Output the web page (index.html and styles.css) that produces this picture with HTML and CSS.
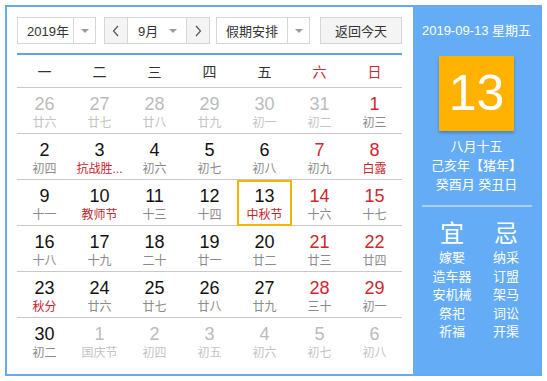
FILE: index.html
```html
<!DOCTYPE html>
<html lang="zh-CN">
<head>
    <meta charset="UTF-8">
    <title>万年历</title>
    <link rel="stylesheet" href="styles.css">
</head>
<body>
<div class="cal">
    <div class="main">
        <!-- 顶部工具条 -->
        <div class="toolbar">
            <div class="select year"><span class="val">2019年</span><span class="drop"><i class="arrow"></i></span></div>
            <div class="month-box">
                <span class="nav"><svg width="8" height="12" viewBox="0 0 8 12"><polyline points="6,1 1.5,6 6,11" fill="none" stroke="#555" stroke-width="1.2"/></svg></span>
                <span class="val month">9月<i class="arrow"></i></span>
                <span class="nav"><svg width="8" height="12" viewBox="0 0 8 12"><polyline points="2,1 6.5,6 2,11" fill="none" stroke="#555" stroke-width="1.2"/></svg></span>
            </div>
            <div class="select holiday"><span class="val">假期安排</span><span class="drop"><i class="arrow"></i></span></div>
            <span class="today">返回今天</span>
        </div>

        <!-- 日历表格 -->
        <div class="grid">
            <div class="wk">一</div><div class="wk">二</div><div class="wk">三</div><div class="wk">四</div><div class="wk">五</div><div class="wk red">六</div><div class="wk red">日</div>

            <div class="day other"><b>26</b><span>廿六</span></div>
            <div class="day other"><b>27</b><span>廿七</span></div>
            <div class="day other"><b>28</b><span>廿八</span></div>
            <div class="day other"><b>29</b><span>廿九</span></div>
            <div class="day other"><b>30</b><span>初一</span></div>
            <div class="day other"><b>31</b><span>初二</span></div>
            <div class="day wkend"><b>1</b><span>初三</span></div>

            <div class="day"><b>2</b><span>初四</span></div>
            <div class="day"><b>3</b><span class="fest">抗战胜...</span></div>
            <div class="day"><b>4</b><span>初六</span></div>
            <div class="day"><b>5</b><span>初七</span></div>
            <div class="day"><b>6</b><span>初八</span></div>
            <div class="day wkend"><b>7</b><span>初九</span></div>
            <div class="day wkend"><b>8</b><span class="fest">白露</span></div>

            <div class="day"><b>9</b><span>十一</span></div>
            <div class="day"><b>10</b><span class="fest">教师节</span></div>
            <div class="day"><b>11</b><span>十三</span></div>
            <div class="day"><b>12</b><span>十四</span></div>
            <div class="day cur"><b>13</b><span class="fest">中秋节</span></div>
            <div class="day wkend"><b>14</b><span>十六</span></div>
            <div class="day wkend"><b>15</b><span>十七</span></div>

            <div class="day"><b>16</b><span>十八</span></div>
            <div class="day"><b>17</b><span>十九</span></div>
            <div class="day"><b>18</b><span>二十</span></div>
            <div class="day"><b>19</b><span>廿一</span></div>
            <div class="day"><b>20</b><span>廿二</span></div>
            <div class="day wkend"><b>21</b><span>廿三</span></div>
            <div class="day wkend"><b>22</b><span>廿四</span></div>

            <div class="day"><b>23</b><span class="fest">秋分</span></div>
            <div class="day"><b>24</b><span>廿六</span></div>
            <div class="day"><b>25</b><span>廿七</span></div>
            <div class="day"><b>26</b><span>廿八</span></div>
            <div class="day"><b>27</b><span>廿九</span></div>
            <div class="day wkend"><b>28</b><span>三十</span></div>
            <div class="day wkend"><b>29</b><span>初一</span></div>

            <div class="day last"><b>30</b><span>初二</span></div>
            <div class="day last other"><b>1</b><span>国庆节</span></div>
            <div class="day last other"><b>2</b><span>初四</span></div>
            <div class="day last other"><b>3</b><span>初五</span></div>
            <div class="day last other"><b>4</b><span>初六</span></div>
            <div class="day last other"><b>5</b><span>初七</span></div>
            <div class="day last other"><b>6</b><span>初八</span></div>
        </div>
    </div>

    <!-- 右侧详情 -->
    <div class="side">
        <div class="date">2019-09-13 星期五</div>
        <div class="big">13</div>
        <div class="lunar">
            <p>八月十五</p>
            <p>己亥年【猪年】</p>
            <p>癸酉月 癸丑日</p>
        </div>
        <div class="line"></div>
        <div class="yiji">
            <div class="col">
                <h3>宜</h3>
                <p>嫁娶</p><p>造车器</p><p>安机械</p><p>祭祀</p><p>祈福</p>
            </div>
            <div class="col">
                <h3>忌</h3>
                <p>纳采</p><p>订盟</p><p>架马</p><p>词讼</p><p>开渠</p>
            </div>
        </div>
    </div>
</div>
</body>
</html>
```

FILE: styles.css
```css
*{
    margin: 0;
    padding: 0;
    box-sizing: border-box;
}
body{
    background: #fff;
    font-family: "Liberation Sans", "Noto Sans CJK SC", sans-serif;
    color: #333;
}
/*整体容器*/
.cal{
    width: 537px;
    height: 371px;
    margin: 5px;
    border: 2px solid #65a9ef;
    display: flex;
}
.main{
    width: 406px;
    padding: 10px 11px 0 10px;
}
/*工具条*/
.toolbar{
    display: flex;
    height: 27px;
    font-size: 13px;
}
.select{
    display: flex;
    border: 1px solid #d6d6d6;
    background: #fff;
}
.select .val{
    display: flex;
    align-items: center;
    padding-left: 9px;
}
.year{
    width: 79px;
}
.year .val{
    width: 55px;
}
.holiday{
    width: 94px;
    margin-left: 6px;
}
.holiday .val{
    width: 70px;
}
.drop{
    flex: 1;
    border-left: 1px solid #d6d6d6;
    display: flex;
    align-items: center;
    justify-content: center;
}
.arrow{
    width: 0;
    height: 0;
    border-left: 4px solid transparent;
    border-right: 4px solid transparent;
    border-top: 4px solid #999;
}
.month-box{
    width: 106px;
    margin-left: 8px;
    display: flex;
    border: 1px solid #d6d6d6;
}
.nav{
    width: 22px;
    background: #f4f4f4;
    display: flex;
    align-items: center;
    justify-content: center;
}
.month-box .month{
    flex: 1;
    display: flex;
    align-items: center;
    justify-content: space-between;
    padding: 0 9px 0 10px;
    border-left: 1px solid #d6d6d6;
    border-right: 1px solid #d6d6d6;
}
.today{
    margin-left: 10px;
    width: 82px;
    border: 1px solid #d6d6d6;
    background: #f4f4f4;
    display: flex;
    align-items: center;
    justify-content: center;
}
/*日历表格*/
.grid{
    margin-top: 9px;
    border-top: 2px solid #5da3ea;
    display: grid;
    grid-template-columns: repeat(7, 55px);
    grid-template-rows: 33px repeat(6, 46px);
}
.wk{
    display: flex;
    align-items: center;
    justify-content: center;
    font-size: 14px;
    border-bottom: 1px solid #c9c9c9;
}
.red{
    color: #d0262e;
}
.day{
    display: flex;
    flex-direction: column;
    align-items: center;
    padding-top: 5px;
    border-bottom: 1px solid #c9c9c9;
}
.day.last{
    border-bottom: none;
}
.day b{
    font-weight: normal;
    font-size: 18px;
    line-height: 22px;
    color: #111;
}
.day span{
    font-size: 12px;
    line-height: 16px;
    color: #8a8a8a;
}
.day .fest{
    color: #c8232c;
}
.wkend b{
    color: #d0262e;
}
.other b{
    color: #bbb;
}
.other span{
    color: #c3c3c3;
}
.cur{
    border: 2px solid #f5b400;
    padding-top: 3px;
}
/*右侧*/
.side{
    flex: 1;
    background: #64adf6;
    color: #fff;
    display: flex;
    flex-direction: column;
    align-items: center;
    padding-top: 15px;
}
.date{
    font-size: 13px;
    line-height: 18px;
}
.big{
    margin-top: 16px;
    width: 75px;
    height: 75px;
    background: #ffb300;
    box-shadow: 0 2px 3px rgba(0,0,0,.25);
    font-size: 50px;
    line-height: 75px;
    text-align: center;
}
.lunar{
    margin-top: 6px;
    text-align: center;
    font-size: 13px;
    line-height: 19px;
}
.line{
    margin-top: 11px;
    width: 110px;
    height: 2px;
    background: #a9d0f7;
}
.yiji{
    margin-top: 14px;
    padding-left: 5px;
    display: grid;
    grid-template-columns: 54px 54px;
    text-align: center;
}
.yiji h3{
    font-weight: normal;
    font-size: 24px;
    line-height: 26px;
    margin-bottom: 2px;
}
.yiji p{
    font-size: 13px;
    line-height: 18.5px;
}
```
